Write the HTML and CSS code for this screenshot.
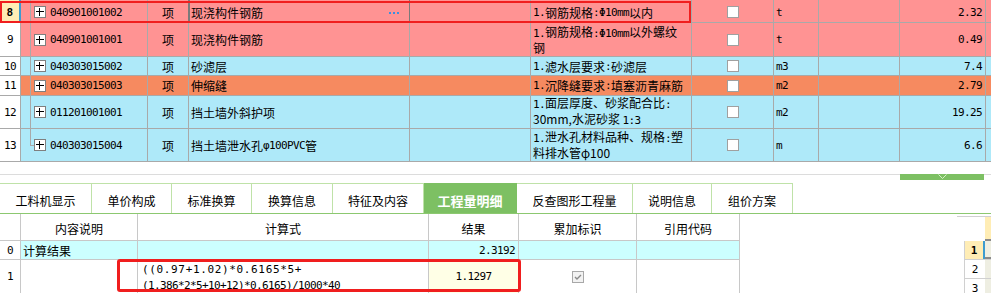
FILE: index.html
```html
<!DOCTYPE html>
<html lang="zh-CN">
<head>
<meta charset="utf-8">
<title>工程量明细</title>
<link rel="stylesheet" href="styles.css">
</head>
<body>
<div class="top">
  <div class="row pink h23 first">
    <div class="c num sel"><span class="m b">8</span></div>
    <div class="c code"><span class="plus"><svg width="10" height="10" viewBox="0 0 10 10"><path d="M1 4.5h8M4.5 1v8" stroke="#000" stroke-width="1"/></svg></span><span class="m">040901001002</span></div>
    <div class="c unit dark">项</div>
    <div class="c name dark editing">现浇构件钢筋<svg class="dots" width="10" height="2" viewBox="0 0 10 2"><rect x="0" y="0" width="2" height="2" fill="#3d8fe0"/><rect x="4" y="0" width="2" height="2" fill="#3d8fe0"/><rect x="8" y="0" width="2" height="2" fill="#3d8fe0"/></svg></div>
    <div class="c"></div>
    <div class="c feat"><span class="m">1.</span>钢筋规格<span class="m">:Φ10mm</span>以内</div>
    <div class="c chk"><span class="box"></span></div>
    <div class="c u2"><span class="m">t</span></div>
    <div class="c"></div>
    <div class="c qty"><span class="m">2.32</span></div>
    <div class="c last"></div>
  </div>
  <div class="row pink h34">
    <div class="c num"><span class="m">9</span></div>
    <div class="c code"><span class="plus"><svg width="10" height="10" viewBox="0 0 10 10"><path d="M1 4.5h8M4.5 1v8" stroke="#000" stroke-width="1"/></svg></span><span class="m">040901001001</span></div>
    <div class="c unit">项</div>
    <div class="c name">现浇构件钢筋</div>
    <div class="c"></div>
    <div class="c feat two"><span><span class="m">1.</span>钢筋规格<span class="m">:Φ10mm</span>以外螺纹<br>钢</span></div>
    <div class="c chk"><span class="box"></span></div>
    <div class="c u2"><span class="m">t</span></div>
    <div class="c"></div>
    <div class="c qty"><span class="m">0.49</span></div>
    <div class="c last"></div>
  </div>
  <div class="row blue h19">
    <div class="c num"><span class="m">10</span></div>
    <div class="c code"><span class="plus"><svg width="10" height="10" viewBox="0 0 10 10"><path d="M1 4.5h8M4.5 1v8" stroke="#000" stroke-width="1"/></svg></span><span class="m">040303015002</span></div>
    <div class="c unit">项</div>
    <div class="c name">砂滤层</div>
    <div class="c"></div>
    <div class="c feat"><span class="m">1.</span>滤水层要求<span class="m">:</span>砂滤层</div>
    <div class="c chk"><span class="box"></span></div>
    <div class="c u2"><span class="m">m3</span></div>
    <div class="c"></div>
    <div class="c qty"><span class="m">7.4</span></div>
    <div class="c last"></div>
  </div>
  <div class="row orange h20">
    <div class="c num"><span class="m">11</span></div>
    <div class="c code"><span class="plus"><svg width="10" height="10" viewBox="0 0 10 10"><path d="M1 4.5h8M4.5 1v8" stroke="#000" stroke-width="1"/></svg></span><span class="m">040303015003</span></div>
    <div class="c unit">项</div>
    <div class="c name">伸缩缝</div>
    <div class="c"></div>
    <div class="c feat"><span class="m">1.</span>沉降缝要求<span class="m">:</span>填塞沥青麻筋</div>
    <div class="c chk"><span class="box"></span></div>
    <div class="c u2"><span class="m">m2</span></div>
    <div class="c"></div>
    <div class="c qty"><span class="m">2.79</span></div>
    <div class="c last"></div>
  </div>
  <div class="row blue h33">
    <div class="c num"><span class="m">12</span></div>
    <div class="c code"><span class="plus"><svg width="10" height="10" viewBox="0 0 10 10"><path d="M1 4.5h8M4.5 1v8" stroke="#000" stroke-width="1"/></svg></span><span class="m">011201001001</span></div>
    <div class="c unit">项</div>
    <div class="c name">挡土墙外斜护项</div>
    <div class="c"></div>
    <div class="c feat two"><span><span class="m">1.</span>面层厚度、砂浆配合比<span class="m">:</span><br>30mm,水泥砂浆 <span class="m">1:3</span></span></div>
    <div class="c chk"><span class="box"></span></div>
    <div class="c u2"><span class="m">m2</span></div>
    <div class="c"></div>
    <div class="c qty"><span class="m">19.25</span></div>
    <div class="c last"></div>
  </div>
  <div class="row blue h33">
    <div class="c num"><span class="m">13</span></div>
    <div class="c code end"><span class="plus"><svg width="10" height="10" viewBox="0 0 10 10"><path d="M1 4.5h8M4.5 1v8" stroke="#000" stroke-width="1"/></svg></span><span class="m">040303015004</span></div>
    <div class="c unit">项</div>
    <div class="c name">挡土墙泄水孔<span class="m">φ100PVC</span>管</div>
    <div class="c"></div>
    <div class="c feat two"><span><span class="m">1.</span>泄水孔材料品种、规格<span class="m">:</span>塑<br>料排水管φ100</span></div>
    <div class="c chk"><span class="box"></span></div>
    <div class="c u2"><span class="m">m</span></div>
    <div class="c"></div>
    <div class="c qty"><span class="m">6.6</span></div>
    <div class="c last"></div>
  </div>
  <div class="mark mark-top"></div>
</div>

<div class="splitter">
  <div class="grip"><svg width="9" height="5" viewBox="0 0 9 5"><polyline points="0.5,0.5 4.5,4.5 8.5,0.5" fill="none" stroke="#d6f0c8" stroke-width="1"/></svg></div>
</div>

<div class="tabs">
  <div class="tab w92">工料机显示</div>
  <div class="tab w80">单价构成</div>
  <div class="tab w80">标准换算</div>
  <div class="tab w81">换算信息</div>
  <div class="tab w91">特征及内容</div>
  <div class="tab w93 active">工程量明细</div>
  <div class="tab w116">反查图形工程量</div>
  <div class="tab w79">说明信息</div>
  <div class="tab w81">组价方案</div>
</div>

<div class="bottom">
  <div class="detail">
    <div class="d hd"></div>
    <div class="d hd">内容说明</div>
    <div class="d hd">计算式</div>
    <div class="d hd">结果</div>
    <div class="d hd">累加标识</div>
    <div class="d hd">引用代码</div>

    <div class="d rn r0"><span class="m">0</span></div>
    <div class="d cy r0 txt">计算结果</div>
    <div class="d cy r0"></div>
    <div class="d cy r0 res"><span class="m">2.3192</span></div>
    <div class="d cy r0"></div>
    <div class="d cy r0"></div>

    <div class="d rn r1"><span class="m">1</span></div>
    <div class="d r1"></div>
    <div class="d r1 formula m"><span class="wide">((0.97+1.02)*0.6165*5+</span>(1.386*2*5+10+12)*0.6165)/1000*40</div>
    <div class="d r1 val"><span class="m">1.1297</span></div>
    <div class="d r1 flag"><span class="cbox"><svg width="10" height="10" viewBox="0 0 10 10"><polyline points="2,5 4,7 8,3" fill="none" stroke="#8a8a8a" stroke-width="1.4"/></svg></span></div>
    <div class="d r1"></div>
    <div class="mark mark-bottom"></div>
  </div>

  <div class="mini">
    <div class="mh"><span class="mhl"></span><span class="mhy"></span></div>
    <div class="mr msel"><span class="mn b">1</span><span class="mc"></span></div>
    <div class="mr"><span class="mn">2</span><span class="mc"></span></div>
    <div class="mr"><span class="mn">3</span><span class="mc"></span></div>
  </div>
</div>
</body>
</html>
```

FILE: styles.css
```css
* { box-sizing: border-box; }
html, body { margin: 0; padding: 0; }
body {
  width: 991px;
  height: 293px;
  overflow: hidden;
  background: #fff;
  color: #000;
  font: 12px/15px "Noto Sans CJK SC", "Noto Sans", sans-serif;
}
.m {
  font-family: "DejaVu Sans Mono", "Liberation Mono", monospace;
  font-size: 11px;
  letter-spacing: -0.62px;
}
.b { font-weight: bold; }

/* ---------- top grid ---------- */
.top { position: relative; }
.row {
  display: grid;
  grid-template-columns: 21px 127px 41px 221px 121px 161px 82px 45px 81px 86px 1fr;
  border-bottom: 1px solid #a9a9a9;
}
.h23 { height: 23px; }
.h34 { height: 34px; }
.h33 { height: 33px; }
.h19 { height: 19px; }
.h20 { height: 20px; }
.first .c { padding-top: 2px; }
.pink { background: #ff9393; }
.blue { background: #aee9f9; }
.orange { background: #f68a60; }

.c {
  border-right: 1px solid #a9a9a9;
  display: flex;
  align-items: center;
  padding: 0 2px;
  white-space: nowrap;
  overflow: hidden;
}
.c.last { border-right: none; }
.c.feat { overflow: visible; }
.two { line-height: 14px; }
.num { background: #fff; justify-content: center; padding: 0; }
.num.sel { background: #ffedb5; border-right: 2px solid #3c9bd0; }
.code {
  padding-left: 13px;
  background: linear-gradient(#a9a9a9, #a9a9a9) 9px 0 / 1px 100% no-repeat;
}
.code.end {
  background:
    linear-gradient(#a9a9a9, #a9a9a9) 9px 0 / 1px 50% no-repeat,
    linear-gradient(#a9a9a9, #a9a9a9) 9px 50% / 5px 1px no-repeat;
}
.plus {
  display: inline-flex;
  width: 12px;
  height: 12px;
  border: 1px solid #7f7f7f;
  background: #fff;
  margin-right: 4px;
  flex: none;
}
.unit { justify-content: center; }
.dark { border-right-color: #7a7a7a; }
.editing { justify-content: space-between; padding-right: 10px; box-shadow: inset 1px 0 #7a7a7a; }
.dots { margin-top: 1px; }
.chk { justify-content: center; }
.box {
  width: 12px;
  height: 12px;
  border: 1px solid #a0a0a0;
  background: #fff;
}
.u2 { padding-left: 2px; }
.qty { justify-content: flex-end; padding-right: 3px; }

.mark {
  position: absolute;
  border-style: solid;
  border-color: #f01e1e;
  pointer-events: none;
}
.mark-top {
  left: 0;
  top: 1px;
  width: 691px;
  height: 22px;
  border-width: 2px;
}

/* ---------- splitter ---------- */
.splitter {
  height: 21px;
  padding: 12px 0 0 900px;
  background: linear-gradient(#dcdcdc, #dcdcdc) 0 12px / 100% 1px no-repeat;
}
.grip {
  width: 84px;
  height: 6px;
  background: #7dc063;
  display: flex;
  justify-content: center;
}

/* ---------- tabs ---------- */
.tabs {
  display: flex;
  height: 31px;
  border-bottom: 1px solid #8cc870;
}
.tab {
  border-top: 1px solid #bfe2a8;
  border-right: 1px solid #bfe2a8;
  display: flex;
  align-items: center;
  justify-content: center;
  padding-top: 3px;
  font-size: 12px;
}
.tab.active {
  background: #7dc063;
  color: #fff;
  font-weight: bold;
  font-size: 13px;
  border-color: #7dc063;
}
.w79 { width: 79px; }
.w80 { width: 80px; }
.w81 { width: 81px; }
.w91 { width: 91px; }
.w92 { width: 92px; }
.w93 { width: 93px; }
.w116 { width: 116px; }

/* ---------- bottom grid ---------- */
.bottom { display: flex; }
.detail {
  position: relative;
  display: grid;
  grid-template-columns: 21px 117px 291px 90px 118px 103px;
  grid-template-rows: 27px 19px 34px;
  width: 740px;
}
.d {
  border-right: 1px solid #c8c8c8;
  border-bottom: 1px solid #c8c8c8;
  display: flex;
  align-items: center;
  white-space: nowrap;
  overflow: hidden;
}
.hd { justify-content: center; padding-top: 3px; }
.rn { justify-content: center; }
.cy { background: #ccffff; }
.txt { padding-left: 2px; }
.res { justify-content: flex-end; padding-right: 3px; }
.formula {
  display: block;
  padding: 2px 0 0 4px;
  line-height: 16px;
}
.formula .wide { display: block; letter-spacing: 0.65px; }
.val { background: #ffffe6; justify-content: center; }
.flag { justify-content: center; }
.cbox {
  display: inline-flex;
  width: 12px;
  height: 12px;
  border: 1px solid #a8a8a8;
  background: #f2f2f2;
}
.mark-bottom {
  left: 117px;
  top: 45px;
  width: 404px;
  height: 33px;
  border-width: 3px;
  border-radius: 3px;
}

/* ---------- mini grid ---------- */
.mini {
  width: 34px;
  margin-left: auto;
  margin-top: 2px;
  border-top: 1px solid #d0d0d0;
}
.mh { display: flex; height: 24px; }
.mhl { flex: 1; }
.mhy { width: 6px; background: #ffedb5; border-bottom: 2px solid #8a8a8a; }
.mr {
  display: flex;
  margin-left: 7px;
  height: 19px;
  border-left: 1px solid #d0d0d0;
  border-bottom: 1px solid #d0d0d0;
}
.mn { width: 20px; display: flex; align-items: center; justify-content: center; font-family: "DejaVu Sans Mono", monospace; font-size: 11px; }
.mc { flex: 1; background: #eeeee2; }
.msel .mn { background: #ffedb5; border-right: 2px solid #3c9bd0; }
.msel .mc { border-bottom: 2px solid #8a8a8a; }
```
